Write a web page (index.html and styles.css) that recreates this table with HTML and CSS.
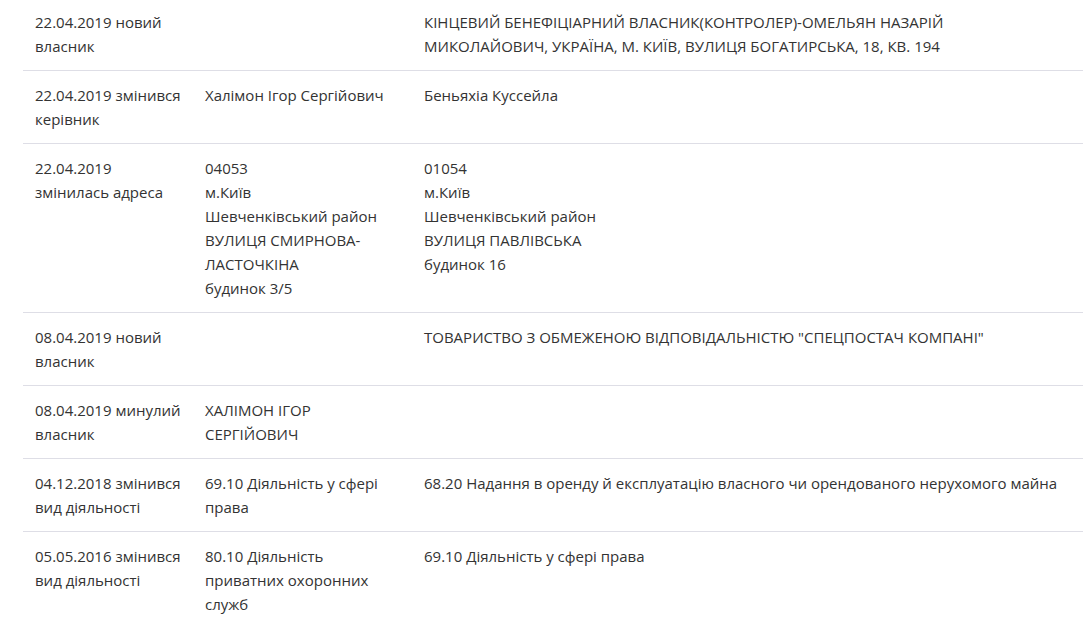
FILE: index.html
```html
<!DOCTYPE html>
<html lang="uk">
<head>
    <meta charset="UTF-8">
    <meta name="viewport" content="width=device-width, initial-scale=1.0">
    <link rel="stylesheet" href="styles.css">
    <title>Історія змін</title>
</head>
<body>
    <div class="history">
        <table class="history-table">
            <colgroup>
                <col class="col-event">
                <col class="col-old">
                <col class="col-new">
            </colgroup>
            <tbody>
                <tr>
                    <td>22.04.2019 новий власник</td>
                    <td></td>
                    <td>КІНЦЕВИЙ БЕНЕФІЦІАРНИЙ ВЛАСНИК(КОНТРОЛЕР)-ОМЕЛЬЯН НАЗАРІЙ МИКОЛАЙОВИЧ, УКРАЇНА, М. КИЇВ, ВУЛИЦЯ БОГАТИРСЬКА, 18, КВ. 194</td>
                </tr>
                <tr>
                    <td>22.04.2019 змінився керівник</td>
                    <td>Халімон Ігор Сергійович</td>
                    <td>Беньяхіа Куссейла</td>
                </tr>
                <tr>
                    <td>22.04.2019 змінилась адреса</td>
                    <td>04053<br>м.Київ<br>Шевченківський район<br>ВУЛИЦЯ СМИРНОВА-ЛАСТОЧКІНА<br>будинок 3/5</td>
                    <td>01054<br>м.Київ<br>Шевченківський район<br>ВУЛИЦЯ ПАВЛІВСЬКА<br>будинок 16</td>
                </tr>
                <tr>
                    <td>08.04.2019 новий власник</td>
                    <td></td>
                    <td>ТОВАРИСТВО З ОБМЕЖЕНОЮ ВІДПОВІДАЛЬНІСТЮ "СПЕЦПОСТАЧ КОМПАНІ"</td>
                </tr>
                <tr>
                    <td>08.04.2019 минулий власник</td>
                    <td>ХАЛІМОН ІГОР СЕРГІЙОВИЧ</td>
                    <td></td>
                </tr>
                <tr>
                    <td>04.12.2018 змінився вид діяльності</td>
                    <td>69.10 Діяльність у сфері права</td>
                    <td>68.20 Надання в оренду й експлуатацію власного чи орендованого нерухомого майна</td>
                </tr>
                <tr>
                    <td>05.05.2016 змінився вид діяльності</td>
                    <td>80.10 Діяльність приватних охоронних служб</td>
                    <td>69.10 Діяльність у сфері права</td>
                </tr>
            </tbody>
        </table>
    </div>
</body>
</html>
```

FILE: styles.css
```css
body {
    font-family: "Open Sans", "Noto Sans", Arial, sans-serif;
    font-size: 15px;
    line-height: 24px;
    color: #333;
    background-color: #fff;
    margin: 0;
    padding: 0;
}
.history {
    margin: -2px 0 0 23px;
}
.history-table {
    width: 1060px;
    border-collapse: collapse;
    table-layout: fixed;
}
.col-event {
    width: 170px;
}
.col-old {
    width: 219px;
}
.history-table td {
    padding: 12px 12px;
    vertical-align: top;
    border-bottom: 1px solid #dedee6;
}
.history-table tr:last-child td {
    border-bottom: none;
}
```
